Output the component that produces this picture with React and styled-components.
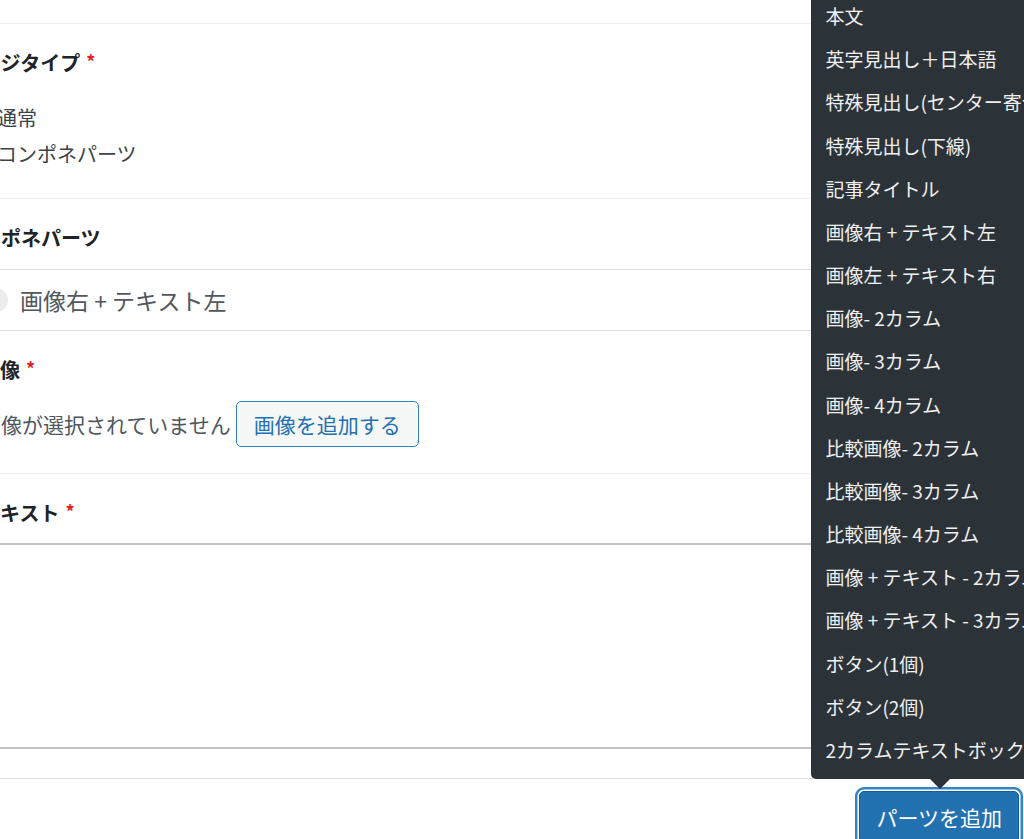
import React from 'react';
import styled, { createGlobalStyle } from 'styled-components';

const Global = createGlobalStyle`
  html, body { margin: 0; padding: 0; background: #fff; }
  body { font-family: "Noto Sans CJK JP", "Noto Sans", sans-serif; color: #3c434a; }
  * { box-sizing: border-box; }
`;

const Page = styled.div`
  position: relative;
  width: 1024px;
  height: 839px;
  overflow: hidden;
  background: #fff;
`;

const Form = styled.div`
  margin-left: -39px;
  width: calc(100% + 39px);
  padding-top: 23px;
`;

const Field = styled.div`
  border-top: 1px solid #f0f0f1;
  padding: 25px 0 ${(p) => (p.$flush ? '0' : '27px')} 0;
`;

const SubField = styled.div`
  border-top: ${(p) => (p.$first ? 'none' : '1px solid #f0f0f1')};
  padding: 25px 0 ${(p) => p.$bottom}px 19px;
`;

const Label = styled.div`
  height: 28px;
  font-size: 20px;
  line-height: 28px;
  font-weight: 700;
  color: #1d2327;
  margin-bottom: ${(p) => p.$gap ?? 17}px;
  white-space: nowrap;
`;

const Required = styled.span`
  color: #e02424;
  font-size: 18px;
  line-height: 0;
  margin-left: 6px;
  vertical-align: 2px;
`;

const RadioList = styled.ul`
  list-style: none;
  margin: 0;
  padding: 6px 0 0 8px;
`;

const RadioItem = styled.li`
  display: flex;
  align-items: center;
  gap: 8px;
  height: 36px;
  font-size: 20px;
  color: #3c434a;
  white-space: nowrap;
`;

const RadioDot = styled.span`
  width: 20px;
  height: 20px;
  border-radius: 50%;
  border: 1.5px solid #8c8f94;
  background: #fff;
  flex: none;
`;

const Layout = styled.div`
  border-bottom: 1px solid #dcdcde;
`;

const LayoutHandle = styled.div`
  height: 62px;
  display: flex;
  align-items: center;
  gap: 12px;
  padding-left: 23px;
  border-top: 1px solid #dcdcde;
  border-bottom: 1px solid #dcdcde;
  font-size: 23px;
  color: #50575e;
  white-space: nowrap;
`;

const OrderBadge = styled.span`
  width: 24px;
  height: 24px;
  border-radius: 50%;
  background: #ececed;
  color: #ececed;
  font-size: 13px;
  display: flex;
  align-items: center;
  justify-content: center;
  flex: none;
`;

const ImageRow = styled.div`
  display: flex;
  align-items: center;
  gap: 5px;
  font-size: 21px;
  color: #50575e;
  white-space: nowrap;
`;

const SecondaryButton = styled.button`
  font-family: inherit;
  font-size: 21px;
  height: 46px;
  padding: 0 17px;
  color: #2271b1;
  background: #f6f7f7;
  border: 1.5px solid #3582c4;
  border-radius: 5px;
  white-space: nowrap;
`;

const TextArea = styled.div`
  height: 206px;
  border-top: 2px solid #c3c4c7;
  border-bottom: 2px solid #c3c4c7;
  background: #fff;
`;

const Actions = styled.div`
  display: flex;
  justify-content: flex-end;
  padding: 12px 5px 0 0;
`;

const ButtonWrap = styled.div`
  position: relative;
`;

const PrimaryButton = styled.button`
  font-family: inherit;
  font-size: 21px;
  height: 52px;
  padding: 0 16px;
  color: #fff;
  background: #2271b1;
  border: 1.5px solid #135e96;
  border-radius: 5px;
  box-shadow: 0 0 0 1.5px #fff, 0 0 0 4px #3582c4;
  white-space: nowrap;
`;

const Popup = styled.ul`
  position: absolute;
  left: -48px;
  bottom: calc(100% + 12px);
  width: 340px;
  margin: 0;
  padding: 6px 0 8px;
  list-style: none;
  background: #2c3338;
  border-radius: 5px;
  &::after {
    content: '';
    position: absolute;
    left: 119px;
    bottom: -10px;
    border-left: 10px solid transparent;
    border-right: 10px solid transparent;
    border-top: 10px solid #2c3338;
  }
`;

const PopupItem = styled.li`
  height: 43.18px;
  display: flex;
  align-items: center;
  padding: 0 14px;
  font-size: 19px;
  color: #f0f0f1;
  white-space: nowrap;
`;

const layouts = [
  '本文',
  '英字見出し＋日本語',
  '特殊見出し(センター寄せ)',
  '特殊見出し(下線)',
  '記事タイトル',
  '画像右 + テキスト左',
  '画像左 + テキスト右',
  '画像- 2カラム',
  '画像- 3カラム',
  '画像- 4カラム',
  '比較画像- 2カラム',
  '比較画像- 3カラム',
  '比較画像- 4カラム',
  '画像 + テキスト - 2カラム',
  '画像 + テキスト - 3カラム',
  'ボタン(1個)',
  'ボタン(2個)',
  '2カラムテキストボックス',
];

export default function App() {
  return (
    <Page>
      <Global />
      <Form>
        <Field>
          <Label $gap={16}>
            ページタイプ<Required>*</Required>
          </Label>
          <RadioList>
            <RadioItem>
              <RadioDot />
              通常
            </RadioItem>
            <RadioItem>
              <RadioDot />
              コンポネパーツ
            </RadioItem>
          </RadioList>
        </Field>
        <Field $flush>
          <Label>コンポネパーツ</Label>
          <Layout>
            <LayoutHandle>
              <OrderBadge>1</OrderBadge>
              画像右 + テキスト左
            </LayoutHandle>
            <SubField $first $bottom={26}>
              <Label>
                画像<Required>*</Required>
              </Label>
              <ImageRow>
                画像が選択されていません
                <SecondaryButton>画像を追加する</SecondaryButton>
              </ImageRow>
            </SubField>
            <SubField $bottom={29}>
              <Label $gap={16}>
                テキスト<Required>*</Required>
              </Label>
              <TextArea />
            </SubField>
          </Layout>
          <Actions>
            <ButtonWrap>
              <Popup>
                {layouts.map((name) => (
                  <PopupItem key={name}>{name}</PopupItem>
                ))}
              </Popup>
              <PrimaryButton>パーツを追加</PrimaryButton>
            </ButtonWrap>
          </Actions>
        </Field>
      </Form>
    </Page>
  );
}
